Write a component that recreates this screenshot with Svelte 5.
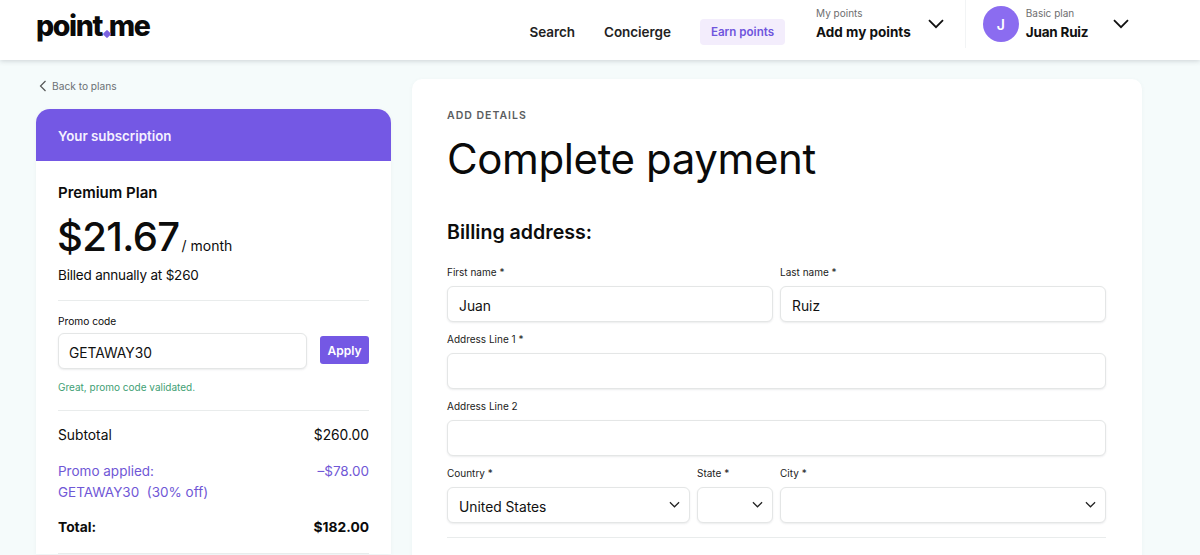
<script>
  // Checkout page: subscription summary on the left, billing form on the right.
  const totals = [
    { label: 'Subtotal', value: '$260.00' }
  ];
</script>

<div class="page">
  <header class="topbar">
    <div class="logo">point<span class="dot"></span>me</div>
    <nav class="nav">
      <a class="nav-link">Search</a>
      <a class="nav-link">Concierge</a>
      <a class="nav-pill">Earn points</a>
    </nav>
    <div class="menu points">
      <div class="menu-text">
        <span class="menu-eyebrow">My points</span>
        <span class="menu-title">Add my points</span>
      </div>
      <svg class="chev-lg" width="16" height="10" viewBox="0 0 16 10"><path d="M1 1.2 8 8.2 15 1.2" /></svg>
    </div>
    <div class="menu user">
      <div class="avatar">J</div>
      <div class="menu-text">
        <span class="menu-eyebrow">Basic plan</span>
        <span class="menu-title name">Juan Ruiz</span>
      </div>
      <svg class="chev-lg" width="16" height="10" viewBox="0 0 16 10"><path d="M1 1.2 8 8.2 15 1.2" /></svg>
    </div>
  </header>

  <div class="content">
    <aside class="side">
      <a class="back">
        <svg width="8" height="12" viewBox="0 0 8 12"><path d="M6.5 1 1.5 6 6.5 11" /></svg>
        Back to plans
      </a>
      <section class="sub-card">
        <div class="sub-head">Your subscription</div>
        <div class="sub-body">
          <h2 class="plan">Premium Plan</h2>
          <div class="price"><span class="amount">$21.67</span><span class="per">/ month</span></div>
          <p class="billed">Billed annually at $260</p>
          <hr />
          <label class="promo-label" for="promo">Promo code</label>
          <div class="promo-row">
            <input id="promo" class="input promo" value="GETAWAY30" />
            <button class="apply">Apply</button>
          </div>
          <p class="valid">Great, promo code validated.</p>
          <hr />
          {#each totals as row}
            <div class="row"><span>{row.label}</span><span>{row.value}</span></div>
          {/each}
          <div class="row applied">
            <span>Promo applied:<br />GETAWAY30&nbsp;&nbsp;(30% off)</span>
            <span>–$78.00</span>
          </div>
          <div class="row total"><span>Total:</span><span>$182.00</span></div>
          <hr />
        </div>
      </section>
    </aside>

    <main class="main-card">
      <div class="eyebrow">ADD DETAILS</div>
      <h1>Complete payment</h1>
      <h2 class="section">Billing address:</h2>
      <form class="form">
        <div class="field f-half">
          <label for="first">First name *</label>
          <input id="first" class="input" value="Juan" />
        </div>
        <div class="field f-half">
          <label for="last">Last name *</label>
          <input id="last" class="input" value="Ruiz" />
        </div>
        <div class="field f-full">
          <label for="a1">Address Line 1 *</label>
          <input id="a1" class="input" />
        </div>
        <div class="field f-full">
          <label for="a2">Address Line 2</label>
          <input id="a2" class="input" />
        </div>
        <div class="field f-country">
          <label for="country">Country *</label>
          <div class="input select" id="country">United States
            <svg width="11" height="7" viewBox="0 0 12 7"><path d="M1 1 6 6 11 1" /></svg>
          </div>
        </div>
        <div class="field f-state">
          <label for="state">State *</label>
          <div class="input select" id="state">
            <svg width="11" height="7" viewBox="0 0 12 7"><path d="M1 1 6 6 11 1" /></svg>
          </div>
        </div>
        <div class="field f-city">
          <label for="city">City *</label>
          <div class="input select" id="city">
            <svg width="11" height="7" viewBox="0 0 12 7"><path d="M1 1 6 6 11 1" /></svg>
          </div>
        </div>
      </form>
      <hr class="form-rule" />
    </main>
  </div>
</div>

<style>
  :global(body) {
    margin: 0;
    background: #f5fbfb;
  }
  .page {
    height: 555px;
    overflow: hidden;
    font-family: Inter, "Liberation Sans", sans-serif;
    color: #0c0c0c;
  }

  .topbar {
    position: relative;
    display: flex;
    align-items: stretch;
    height: 60px;
    padding-left: 36px;
    background: #fff;
    box-shadow: 0 1px 5px rgba(60, 70, 80, 0.22);
  }
  .logo {
    align-self: center;
    margin-top: -8px;
    font-size: 28.5px;
    font-weight: 800;
    letter-spacing: -1.35px;
    color: #0a0a0a;
    line-height: 1;
  }
  .dot {
    display: inline-block;
    width: 6px;
    height: 6px;
    margin: 0 0.5px 0 0;
    background: #7a62e0;
    transform: translate(2px, 1px) rotate(45deg);
    border-radius: 1px;
  }
  .nav {
    display: flex;
    align-items: center;
    gap: 29px;
    margin-left: 380px;
    font-size: 13.5px;
    font-weight: 600;
    color: #222;
  }
  .nav-link {
    margin-top: 3px;
    letter-spacing: -0.05px;
  }
  .nav-pill {
    padding: 0 11px;
    height: 26px;
    line-height: 26px;
    font-size: 11.6px;
    font-weight: 600;
    color: #6f55dd;
    background: #f3edfc;
    border-radius: 4px;
    margin-top: 4px;
  }
  .menu {
    display: flex;
    align-items: center;
    margin-bottom: 12px;
  }
  .points {
    margin-left: 31px;
    padding-right: 21px;
    border-right: 1px solid #f2f4f5;
  }
  .user {
    margin-left: 17px;
  }
  .menu-text {
    display: flex;
    flex-direction: column;
    gap: 3px;
  }
  .menu-eyebrow {
    font-size: 10px;
    line-height: 13px;
    color: #6e6e6e;
  }
  .menu-title {
    font-size: 13.5px;
    line-height: 18px;
    font-weight: 700;
    color: #111;
  }
  .menu-title.name { letter-spacing: -0.2px; }
  .chev-lg {
    margin-left: 17px;
    fill: none;
    stroke: #111;
    stroke-width: 1.8;
  }
  .user .chev-lg { margin-left: 25px; }
  .avatar {
    width: 36px;
    height: 36px;
    margin-right: 7px;
    border-radius: 50%;
    background: #8b6cf0;
    color: #fff;
    font-size: 14px;
    font-weight: 600;
    display: flex;
    align-items: center;
    justify-content: center;
  }

  .content {
    display: flex;
    align-items: flex-start;
    padding: 0 36px;
    gap: 21px;
  }
  .side {
    width: 355px;
    flex: none;
  }
  .back {
    display: flex;
    align-items: center;
    gap: 5px;
    height: 49px;
    padding: 3px 0 0 3px;
    box-sizing: border-box;
    font-size: 10.2px;
    color: #6b7074;
  }
  .back svg {
    fill: none;
    stroke: #555;
    stroke-width: 1.2;
  }
  .sub-card {
    border-radius: 14px 14px 0 0;
    background: #fff;
    box-shadow: 0 1px 4px rgba(80, 90, 100, 0.06);
  }
  .sub-head {
    height: 52px;
    line-height: 55px;
    padding-left: 22px;
    background: #7458e4;
    border-radius: 14px 14px 0 0;
    color: #f4f1ff;
    font-size: 13.3px;
    font-weight: 600;
  }
  .sub-body {
    padding: 22px 22px 0 22px;
  }
  .plan {
    margin: 0;
    font-size: 15px;
    line-height: 19px;
    font-weight: 600;
  }
  .price {
    display: flex;
    align-items: baseline;
    margin-top: 10px;
  }
  .amount {
    font-size: 40px;
    line-height: 50px;
    font-weight: 500;
    letter-spacing: -0.6px;
    margin-left: -1px;
  }
  .per {
    margin-left: 2px;
    font-size: 14px;
  }
  .billed {
    margin: 4px 0 16px;
    font-size: 13.5px;
    line-height: 18px;
    letter-spacing: -0.2px;
  }
  hr {
    margin: 0;
    border: 0;
    border-top: 1px solid #e9ecec;
  }
  .promo-label {
    display: block;
    margin: 14px 0 5px;
    font-size: 10.2px;
    line-height: 13px;
  }
  .promo-row {
    display: flex;
    align-items: flex-start;
    justify-content: space-between;
  }
  .input {
    display: block;
    box-sizing: border-box;
    width: 100%;
    height: 36px;
    padding: 3px 11px 0;
    border: 1px solid #e4e6e6;
    border-radius: 6px;
    background: #fff;
    box-shadow: 0 1px 2px rgba(60, 70, 80, 0.1);
    font-family: inherit;
    font-size: 13.8px;
    color: #111;
    outline: none;
  }
  .promo {
    width: 249px;
    padding-left: 10px;
  }
  .apply {
    width: 49px;
    height: 28px;
    margin-top: 3px;
    padding: 0;
    border: 0;
    border-radius: 3px;
    background: #7458e4;
    color: #fff;
    font-family: inherit;
    font-size: 12px;
    font-weight: 600;
  }
  .valid {
    margin: 12px 0 16px;
    font-size: 10px;
    line-height: 13px;
    color: #41a074;
  }
  .row {
    display: flex;
    justify-content: space-between;
    font-size: 13.8px;
    line-height: 21px;
    padding-top: 14px;
  }
  .applied {
    color: #7057d6;
    font-size: 13.5px;
    padding-top: 15px;
  }
  .total {
    padding: 14px 0 15px;
    font-weight: 700;
  }

  .main-card {
    flex: none;
    box-sizing: border-box;
    width: 730px;
    height: 600px;
    margin-top: 19px;
    padding: 30px 36px 0 35px;
    background: #fff;
    border-radius: 10px;
    box-shadow: 0 1px 4px rgba(80, 90, 100, 0.05);
  }
  .eyebrow {
    font-size: 10.5px;
    line-height: 14px;
    font-weight: 600;
    letter-spacing: 1px;
    color: #5a5d60;
  }
  h1 {
    margin: 9px 0 0;
    font-size: 42px;
    line-height: 54px;
    font-weight: 400;
    letter-spacing: -0.4px;
    color: #0a0a0a;
  }
  .section {
    margin: 33px 0 0;
    font-size: 19.6px;
    line-height: 26px;
    font-weight: 600;
  }
  .form {
    display: grid;
    grid-template-columns: 243px 76px 326px;
    column-gap: 7px;
    margin-top: 21px;
  }
  .field label {
    display: block;
    height: 20px;
    font-size: 10px;
    line-height: 13px;
    color: #1b1b1b;
  }
  .field { padding-bottom: 11px; }
  .f-half:nth-child(1) { grid-column: 1 / 3; }
  .f-half:nth-child(2) { grid-column: 3; }
  .f-full { grid-column: 1 / -1; }
  .select {
    display: flex;
    align-items: center;
    justify-content: space-between;
    padding-right: 9px;
  }
  .select svg {
    margin-left: auto;
    margin-top: -5px;
    fill: none;
    stroke: #222;
    stroke-width: 1.3;
  }
  .form-rule { margin-top: 3px; }
</style>
